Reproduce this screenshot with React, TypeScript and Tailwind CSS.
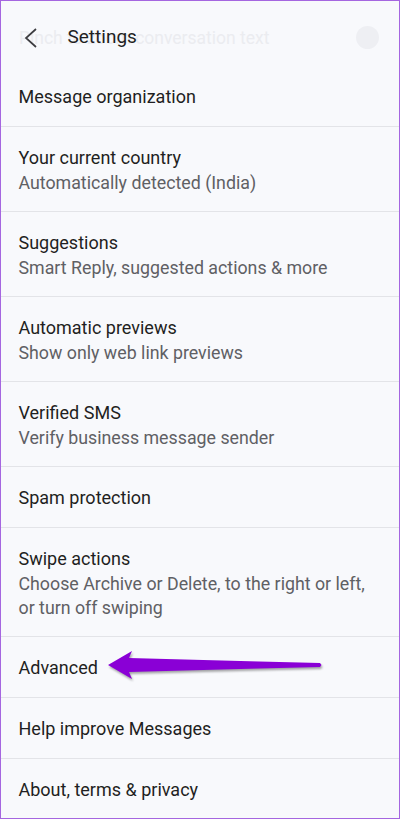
interface SettingItem {
  title: string;
  subtitle?: string;
}

const items: SettingItem[] = [
  { title: 'Message organization' },
  { title: 'Your current country', subtitle: 'Automatically detected (India)' },
  { title: 'Suggestions', subtitle: 'Smart Reply, suggested actions & more' },
  { title: 'Automatic previews', subtitle: 'Show only web link previews' },
  { title: 'Verified SMS', subtitle: 'Verify business message sender' },
  { title: 'Spam protection' },
  { title: 'Swipe actions', subtitle: 'Choose Archive or Delete, to the right or left, or turn off swiping' },
  { title: 'Advanced' },
  { title: 'Help improve Messages' },
  { title: 'About, terms & privacy' },
];

function Arrow() {
  return (
    <svg
      className="absolute left-[100px] top-[12px] drop-shadow-[1px_2px_1px_rgba(0,0,0,0.35)]"
      width="225"
      height="34"
      viewBox="0 0 225 34"
    >
      <polygon
        points="7,16 31,2 28,9 219,14 220.5,16 219,18 28,23 31,30"
        fill="#8a00d6"
      />
    </svg>
  );
}

export default function App() {
  return (
    <div className="h-[819px] w-[400px] overflow-hidden bg-[#f8f9fc] border-[1.5px] border-[#a566e0] font-['Roboto',sans-serif]">
      <div className="relative flex h-[65px] items-center pt-[8px]">
        <span className="absolute left-[18px] top-[25px] text-[17.5px] leading-6 text-[#ebecf0]">
          Pinch to zoom conversation text
        </span>
        <span className="absolute right-[20px] top-[25px] h-[23px] w-[23px] rounded-full bg-[#eeeff3]" />
        <svg className="relative ml-[22.5px]" width="14" height="20" viewBox="0 0 14 20">
          <polyline points="12,1 2,10 12,19" fill="none" stroke="#3c3c40" strokeWidth="1.7" />
        </svg>
        <h1 className="relative ml-[30px] text-[19px] text-[#1f1f22]">Settings</h1>
      </div>

      <div className="flex flex-col">
        {items.map((item) => (
          <div
            key={item.title}
            className="relative border-b border-[#e3e4e8] pt-[18px] pb-[16px] pl-[17.5px] pr-[24px]"
          >
            <p className="text-[18px] leading-[26px] text-[#1f1f22]">{item.title}</p>
            {item.subtitle && (
              <p className="text-[17.8px] leading-[24px] text-[#5f6064]">{item.subtitle}</p>
            )}
            {item.title === 'Advanced' && <Arrow />}
          </div>
        ))}
      </div>
    </div>
  );
}
